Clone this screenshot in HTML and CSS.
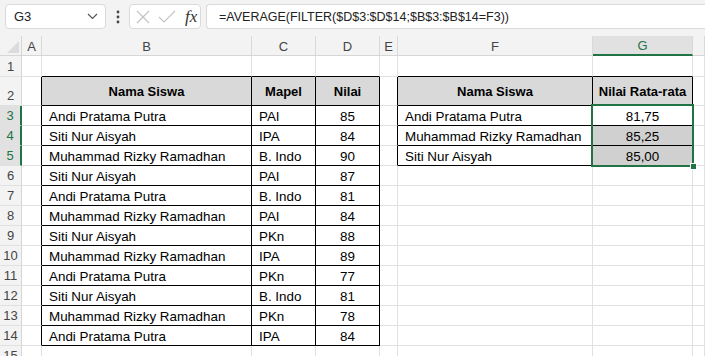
FILE: index.html
```html
<!DOCTYPE html>
<html lang="id">
<head>
    <meta charset="UTF-8">
    <title>Rata-rata Nilai Siswa</title>
    <link rel="stylesheet" href="styles.css">
</head>
<body>
    <!-- Formula bar -->
    <div class="toolbar">
        <div class="namebox">
            <span>G3</span>
            <svg width="11" height="7" viewBox="0 0 11 7"><polyline points="1,1 5.5,5.5 10,1" fill="none" stroke="#555" stroke-width="1.2"/></svg>
        </div>
        <div class="dots">
            <svg width="4" height="14" viewBox="0 0 4 14"><circle cx="2" cy="2" r="1.4" fill="#444"/><circle cx="2" cy="7" r="1.4" fill="#444"/><circle cx="2" cy="12" r="1.4" fill="#444"/></svg>
        </div>
        <div class="fx-buttons">
            <svg width="16" height="16" viewBox="0 0 16 16"><path d="M2 2 L14 14 M14 2 L2 14" stroke="#c4c4c4" stroke-width="1.2" fill="none"/></svg>
            <svg width="18" height="16" viewBox="0 0 18 16"><polyline points="1,8 6,13 17,2" stroke="#c4c4c4" stroke-width="1.2" fill="none"/></svg>
            <span class="fx">fx</span>
        </div>
        <div class="formula">=AVERAGE(FILTER($D$3:$D$14;$B$3:$B$14=F3))</div>
    </div>

    <!-- Sheet grid -->
    <div class="sheet">
        <div class="grid">
            <div class="corner"><span class="tri"></span></div>
            <div class="ch">A</div>
            <div class="ch">B</div>
            <div class="ch">C</div>
            <div class="ch">D</div>
            <div class="ch">E</div>
            <div class="ch">F</div>
            <div class="ch sel">G</div>
            <div class="ch"></div>

            <div class="rh">1</div>
            <div class="cell"></div>
            <div class="cell edge-b"></div>
            <div class="cell edge-b"></div>
            <div class="cell edge-b"></div>
            <div class="cell"></div>
            <div class="cell edge-b"></div>
            <div class="cell edge-b"></div>
            <div class="cell"></div>

            <div class="rh">2</div>
            <div class="cell edge-r"></div>
            <div class="cell tbl th">Nama Siswa</div>
            <div class="cell tbl th">Mapel</div>
            <div class="cell tbl th">Nilai</div>
            <div class="cell edge-r"></div>
            <div class="cell tbl th">Nama Siswa</div>
            <div class="cell tbl th">Nilai Rata-rata</div>
            <div class="cell"></div>

            <div class="rh sel">3</div>
            <div class="cell edge-r"></div>
            <div class="cell tbl">Andi Pratama Putra</div>
            <div class="cell tbl">PAI</div>
            <div class="cell tbl num">85</div>
            <div class="cell edge-r"></div>
            <div class="cell tbl">Andi Pratama Putra</div>
            <div class="cell tbl num">81,75</div>
            <div class="cell"></div>

            <div class="rh sel">4</div>
            <div class="cell edge-r"></div>
            <div class="cell tbl">Siti Nur Aisyah</div>
            <div class="cell tbl">IPA</div>
            <div class="cell tbl num">84</div>
            <div class="cell edge-r"></div>
            <div class="cell tbl">Muhammad Rizky Ramadhan</div>
            <div class="cell tbl num shade">85,25</div>
            <div class="cell"></div>

            <div class="rh sel">5</div>
            <div class="cell edge-r"></div>
            <div class="cell tbl">Muhammad Rizky Ramadhan</div>
            <div class="cell tbl">B. Indo</div>
            <div class="cell tbl num">90</div>
            <div class="cell edge-r"></div>
            <div class="cell tbl">Siti Nur Aisyah</div>
            <div class="cell tbl num shade">85,00</div>
            <div class="cell"></div>

            <div class="rh">6</div>
            <div class="cell edge-r"></div>
            <div class="cell tbl">Siti Nur Aisyah</div>
            <div class="cell tbl">PAI</div>
            <div class="cell tbl num">87</div>
            <div class="cell"></div>
            <div class="cell"></div>
            <div class="cell"></div>
            <div class="cell"></div>

            <div class="rh">7</div>
            <div class="cell edge-r"></div>
            <div class="cell tbl">Andi Pratama Putra</div>
            <div class="cell tbl">B. Indo</div>
            <div class="cell tbl num">81</div>
            <div class="cell"></div>
            <div class="cell"></div>
            <div class="cell"></div>
            <div class="cell"></div>

            <div class="rh">8</div>
            <div class="cell edge-r"></div>
            <div class="cell tbl">Muhammad Rizky Ramadhan</div>
            <div class="cell tbl">PAI</div>
            <div class="cell tbl num">84</div>
            <div class="cell"></div>
            <div class="cell"></div>
            <div class="cell"></div>
            <div class="cell"></div>

            <div class="rh">9</div>
            <div class="cell edge-r"></div>
            <div class="cell tbl">Siti Nur Aisyah</div>
            <div class="cell tbl">PKn</div>
            <div class="cell tbl num">88</div>
            <div class="cell"></div>
            <div class="cell"></div>
            <div class="cell"></div>
            <div class="cell"></div>

            <div class="rh">10</div>
            <div class="cell edge-r"></div>
            <div class="cell tbl">Muhammad Rizky Ramadhan</div>
            <div class="cell tbl">IPA</div>
            <div class="cell tbl num">89</div>
            <div class="cell"></div>
            <div class="cell"></div>
            <div class="cell"></div>
            <div class="cell"></div>

            <div class="rh">11</div>
            <div class="cell edge-r"></div>
            <div class="cell tbl">Andi Pratama Putra</div>
            <div class="cell tbl">PKn</div>
            <div class="cell tbl num">77</div>
            <div class="cell"></div>
            <div class="cell"></div>
            <div class="cell"></div>
            <div class="cell"></div>

            <div class="rh">12</div>
            <div class="cell edge-r"></div>
            <div class="cell tbl">Siti Nur Aisyah</div>
            <div class="cell tbl">B. Indo</div>
            <div class="cell tbl num">81</div>
            <div class="cell"></div>
            <div class="cell"></div>
            <div class="cell"></div>
            <div class="cell"></div>

            <div class="rh">13</div>
            <div class="cell edge-r"></div>
            <div class="cell tbl">Muhammad Rizky Ramadhan</div>
            <div class="cell tbl">PKn</div>
            <div class="cell tbl num">78</div>
            <div class="cell"></div>
            <div class="cell"></div>
            <div class="cell"></div>
            <div class="cell"></div>

            <div class="rh">14</div>
            <div class="cell edge-r"></div>
            <div class="cell tbl">Andi Pratama Putra</div>
            <div class="cell tbl">IPA</div>
            <div class="cell tbl num">84</div>
            <div class="cell"></div>
            <div class="cell"></div>
            <div class="cell"></div>
            <div class="cell"></div>

            <div class="rh">15</div>
            <div class="cell"></div>
            <div class="cell"></div>
            <div class="cell"></div>
            <div class="cell"></div>
            <div class="cell"></div>
            <div class="cell"></div>
            <div class="cell"></div>
            <div class="cell"></div>
        </div>

        <!-- Selected range G3:G5 -->
        <div class="selection"><span class="handle"></span></div>
    </div>
</body>
</html>
```

FILE: styles.css
```css
* {
    box-sizing: border-box;
}

body {
    margin: 0;
    width: 705px;
    height: 356px;
    overflow: hidden;
    background-color: #fff;
    font-family: 'Liberation Sans', Arial, sans-serif;
    color: #000;
}

/* Formula bar */
.toolbar {
    height: 36px;
    background-color: #f3f3f3;
    display: flex;
    align-items: flex-start;
    padding: 4px 0 0 5px;
}

.namebox {
    width: 101px;
    height: 25px;
    background-color: #fff;
    border: 1px solid #dadada;
    border-radius: 4px;
    display: flex;
    align-items: center;
    justify-content: space-between;
    padding: 0 7px 0 8px;
    font-size: 13px;
    color: #222;
}

.dots {
    width: 23px;
    height: 25px;
    display: flex;
    align-items: center;
    justify-content: center;
}

.fx-buttons {
    width: 72px;
    height: 25px;
    background-color: #fff;
    border: 1px solid #dadada;
    border-radius: 4px;
    display: flex;
    align-items: center;
    gap: 7px;
    padding-left: 5px;
}

.fx {
    font-family: 'Liberation Serif', 'Times New Roman', serif;
    font-style: italic;
    font-size: 17px;
    color: #333;
    margin-left: 2px;
}

.formula {
    flex: 1;
    height: 25px;
    margin-left: 5px;
    background-color: #fff;
    border: 1px solid #dadada;
    border-right: none;
    border-radius: 4px 0 0 4px;
    display: flex;
    align-items: center;
    padding-left: 12px;
    font-size: 12.5px;
    color: #222;
}

/* Sheet */
.sheet {
    position: relative;
}

.grid {
    display: grid;
    grid-template-columns: 22px 20px 210px 64px 64px 18px 195px 100px 1fr;
    grid-template-rows: 20px 21px 29px repeat(13, 20px);
}

.corner {
    background-color: #f3f3f3;
    border-right: 1px solid #d6d6d6;
    border-bottom: 1px solid #d6d6d6;
    position: relative;
}

.corner .tri {
    position: absolute;
    right: 2px;
    bottom: 2px;
    width: 0;
    height: 0;
    border-left: 12px solid transparent;
    border-bottom: 12px solid #dcdcdc;
}

.ch {
    background-color: #f3f3f3;
    border-right: 1px solid #d9d9d9;
    border-bottom: 1px solid #d6d6d6;
    display: flex;
    align-items: center;
    justify-content: center;
    font-size: 13px;
    color: #444;
    padding-top: 1px;
}

.ch.sel {
    background-color: #e1e1e1;
    border-bottom: 2px solid #217346;
    color: #217346;
}

.rh {
    background-color: #f3f3f3;
    border-right: 1px solid #d6d6d6;
    border-bottom: 1px solid #e0e0e0;
    display: flex;
    align-items: flex-end;
    justify-content: center;
    padding-bottom: 2px;
    font-size: 13px;
    color: #444;
}

.rh.sel {
    background-color: #e1e1e1;
    border-right: 2px solid #217346;
    color: #217346;
}

.cell {
    border-right: 1px solid #e1e1e1;
    border-bottom: 1px solid #e1e1e1;
    display: flex;
    align-items: center;
    padding: 1px 0 0 7px;
    font-size: 13.4px;
    white-space: nowrap;
    overflow: hidden;
}

.cell.edge-r {
    border-right-color: #000;
}

.cell.edge-b {
    border-bottom-color: #000;
}

.cell.tbl {
    border-right-color: #000;
    border-bottom-color: #000;
}

.cell.th {
    background-color: #d9d9d9;
    font-weight: bold;
    justify-content: center;
    padding-left: 0;
    font-size: 13px;
}

.cell.num {
    justify-content: center;
    padding-left: 0;
}

.cell.shade {
    background-color: #d0d0d0;
}

/* Selection outline over G3:G5 */
.selection {
    position: absolute;
    left: 591px;
    top: 68px;
    width: 103px;
    height: 63px;
    border: 2px solid #217346;
    pointer-events: none;
}

.selection .handle {
    position: absolute;
    right: -5px;
    bottom: -5px;
    width: 7px;
    height: 7px;
    background-color: #217346;
    border: 1px solid #fff;
}
```
